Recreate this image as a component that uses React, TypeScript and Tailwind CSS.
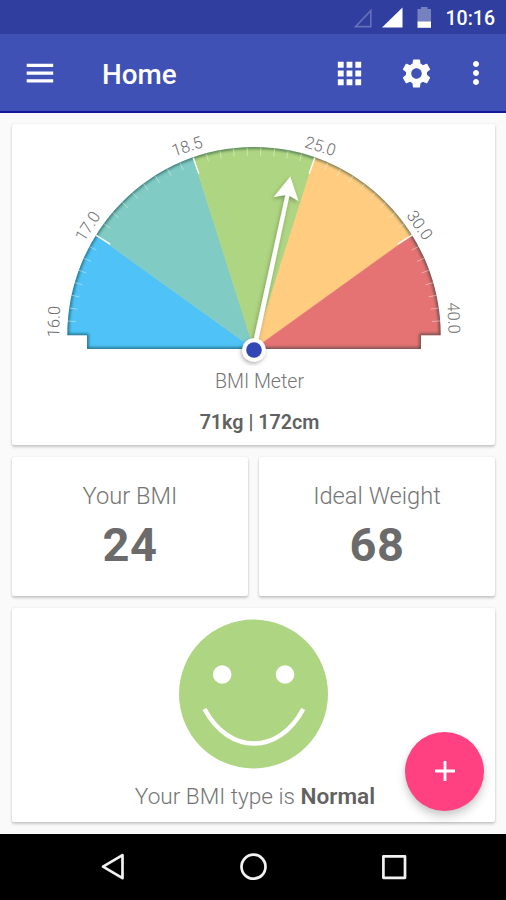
import { useState } from "react";
import { MdApps, MdMoreVert, MdSettings } from "react-icons/md";

const CX = 254;
const CY = 334;
const R = 186.5;

// angles run clockwise from the left end of the dial
const STOPS = [0, 32, 71, 109, 148, 180];
const COLORS = ["#4fc3f7", "#80cbc4", "#aed581", "#ffcc80", "#e57373"];
const TICKS = [7, 8, 8, 8, 7];

const LABELS = [
  { text: "16.0", x: 53.5, y: 321.5, rotate: -88 },
  { text: "17.0", x: 87.5, y: 226, rotate: -57 },
  { text: "18.5", x: 187, y: 146, rotate: -18 },
  { text: "25.0", x: 320.5, y: 146, rotate: 17 },
  { text: "30.0", x: 420, y: 225, rotate: 55 },
  { text: "40.0", x: 454, y: 318, rotate: 88 },
];

const OUTLINE = "M67.3 335.3A186.7 188.3 0 0 1 440.7 335.3H421V349H87V335.3Z";

function point(deg: number, r: number) {
  const a = (deg * Math.PI) / 180;
  return { x: CX - r * Math.cos(a), y: CY - r * Math.sin(a) };
}

function wedge(i: number) {
  const a = i === 0 ? { x: 40, y: 350 } : point(STOPS[i], R);
  const b = i === COLORS.length - 1 ? { x: 467, y: 350 } : point(STOPS[i + 1], R);
  const far = point((STOPS[i] + STOPS[i + 1]) / 2, R + 60);
  return `M${CX} 349L${a.x} ${a.y}L${far.x} ${far.y}L${b.x} ${b.y}Z`;
}

function Tick({ deg, length, opacity, width }: { deg: number; length: number; opacity: number; width: number }) {
  const a = point(deg, R);
  const b = point(deg, R - length);
  return <line x1={a.x} y1={a.y} x2={b.x} y2={b.y} stroke="#fff" strokeWidth={width} opacity={opacity} />;
}

function Gauge() {
  return (
    <svg viewBox="12 124 484 242" className="block h-[242px] w-[484px]">
      <defs>
        <clipPath id="dial">
          <path d={OUTLINE} />
        </clipPath>
        <filter id="soft" x="-20%" y="-20%" width="140%" height="140%">
          <feGaussianBlur stdDeviation="1.6" />
        </filter>
        <filter id="drop" x="-50%" y="-20%" width="200%" height="140%">
          <feDropShadow dx="-1" dy="2" stdDeviation="2" floodColor="#000" floodOpacity="0.3" />
        </filter>
      </defs>
      <g clipPath="url(#dial)">
        {COLORS.map((c, i) => (
          <path key={c} d={wedge(i)} fill={c} stroke={c} strokeWidth="0.5" />
        ))}
        <path d={OUTLINE} fill="none" stroke="#00332f" strokeWidth="3" opacity="0.6" filter="url(#soft)" />
      </g>
      {TICKS.map((n, i) =>
        Array.from({ length: n }, (_, k) => {
          const deg = STOPS[i] + ((STOPS[i + 1] - STOPS[i]) * (k + 1)) / (n + 1);
          return <Tick key={deg} deg={deg} length={8} opacity={0.4} width={1} />;
        }),
      )}
      {STOPS.slice(1, -1).map((deg) => (
        <Tick key={deg} deg={deg} length={17} opacity={0.9} width={1.5} />
      ))}
      {LABELS.map((l) => (
        <text
          key={l.text}
          transform={`translate(${l.x} ${l.y}) rotate(${l.rotate})`}
          textAnchor="middle"
          dy="0.36em"
          className="fill-[#6b6b6b] text-[16.5px] font-light"
        >
          {l.text}
        </text>
      ))}
      <g filter="url(#drop)">
        <path d="M252 347L285.4 195L273.7 197L290.3 176.5L298.5 201L289.4 195.8L257 347Z" fill="#fff" />
      </g>
      <circle cx="254" cy="350" r="11.8" fill="#fff" filter="url(#drop)" />
      <circle cx="254" cy="350" r="7.8" fill="#3247b5" />
    </svg>
  );
}

function Card({ className, children }: { className?: string; children: React.ReactNode }) {
  return (
    <section
      className={[
        "flex flex-col items-center rounded-[2px] bg-white shadow-[0_2px_3px_rgba(0,0,0,0.2),0_0_2px_rgba(0,0,0,0.1)]",
        className ?? "",
      ].join(" ")}
    >
      {children}
    </section>
  );
}

function Stat({ label, value }: { label: string; value: number }) {
  return (
    <Card className="h-[139px] flex-1 pt-[24px]">
      <div className="text-[23.7px] leading-[30px] font-light text-[#757575]">{label}</div>
      <div className="mt-[6px] text-[47px] leading-[56px] font-bold tracking-[0.5px] text-[#6b6b6b]">{value}</div>
    </Card>
  );
}

function StatusBar() {
  return (
    <div className="flex h-[34px] items-center justify-end bg-[#303f9f] pt-[2px] pr-[11px]">
      <svg viewBox="0 0 80 22" className="h-[22px] w-[80px]">
        <path d="M2.5 19.6H17.8V3.6Z" fill="none" stroke="#6470b8" strokeWidth="1.6" />
        <path d="M29 20.4H49.5V0.4Z" fill="#fff" />
        <path d="M64.5 2H68V0H74.5V2H78V15H64.5Z" fill="#7781c0" />
        <path d="M64.5 14.5H78V20.8H64.5Z" fill="#fff" />
      </svg>
      <span className="ml-[13px] pt-[2px] text-[19.5px] font-medium text-white">10:16</span>
    </div>
  );
}

function AppBar() {
  return (
    <header className="flex h-[79px] items-center border-b-2 border-[#16189a] bg-[#3f51b5] pt-px pr-[12px] pl-[26px] text-white">
      <button aria-label="menu">
        <svg viewBox="0 0 28 22" className="h-[22px] w-[28px]" fill="currentColor">
          <path d="M0.7 1.8H27.2V5H0.7ZM0.7 9.5H27.2V12.7H0.7ZM0.7 17.2H27.2V20.4H0.7Z" />
        </svg>
      </button>
      <h1 className="ml-[48px] flex-1 pt-[4px] text-[27.8px] font-medium">Home</h1>
      <button aria-label="apps">
        <MdApps size={35} />
      </button>
      <button className="ml-[32px]" aria-label="settings">
        <MdSettings size={35} />
      </button>
      <button className="ml-[24px]" aria-label="more">
        <MdMoreVert size={36} />
      </button>
    </header>
  );
}

function NavBar() {
  return (
    <nav className="flex h-[66px] items-center justify-center gap-[110px] bg-black">
      <svg viewBox="0 0 30 30" className="size-[30px]" fill="none" stroke="#f2f2f2" strokeWidth="2.7" strokeLinejoin="round">
        <path d="M5 14.7L24.5 3.2V26.2Z" />
      </svg>
      <svg viewBox="0 0 30 30" className="size-[30px]" fill="none" stroke="#f2f2f2" strokeWidth="2.7">
        <circle cx="15.5" cy="14.7" r="12" />
      </svg>
      <svg viewBox="0 0 30 30" className="size-[30px]" fill="none" stroke="#f2f2f2" strokeWidth="2.7" strokeLinejoin="round">
        <path d="M5.4 4.3H27V25.8H5.4Z" />
      </svg>
    </nav>
  );
}

export default function App() {
  const [bmi] = useState(24);

  return (
    <div className="relative flex h-[900px] w-[506px] flex-col overflow-hidden bg-[#fafafa] font-['Roboto',sans-serif]">
      <StatusBar />
      <AppBar />
      <main className="flex flex-1 flex-col gap-[12px] pt-[11px] pr-[11px] pl-[12px]">
        <Card className="h-[321px]">
          <Gauge />
          <div className="mt-[3px] pl-[12px] text-[19.6px] leading-[26px] font-light text-[#757575]">BMI Meter</div>
          <div className="mt-[15px] pl-[12px] text-[19.7px] leading-[26px] font-semibold text-[#616161]">71kg | 172cm</div>
        </Card>
        <div className="flex gap-[11px]">
          <Stat label="Your BMI" value={bmi} />
          <Stat label="Ideal Weight" value={68} />
        </div>
        <Card className="h-[214px] pt-[11px]">
          <svg viewBox="179 619 150 150" className="size-[150px] shrink-0">
            <circle cx="253.5" cy="694" r="74.5" fill="#aed581" />
            <circle cx="222.2" cy="674.5" r="9.3" fill="#fff" />
            <circle cx="285" cy="674.5" r="9.3" fill="#fff" />
            <path d="M204.5 709C229 755 279 755 303.2 709" fill="none" stroke="#fff" strokeWidth="4.5" />
          </svg>
          <div className="mt-[13px] pl-[3px] text-[22.6px] leading-[30px] font-light text-[#757575]">
            Your BMI type is <span className="font-semibold text-[#616161]">Normal</span>
          </div>
        </Card>
      </main>
      <button
        aria-label="add"
        className="absolute right-[22px] bottom-[89.5px] flex size-[79px] items-center justify-center rounded-full bg-[#ff4081] shadow-[0_6px_10px_rgba(0,0,0,0.18),0_1px_5px_rgba(0,0,0,0.06)]"
      >
        <svg viewBox="0 0 20 20" className="size-[20px]" stroke="#fff" strokeWidth="2.8">
          <path d="M10 0V20M0 10H20" />
        </svg>
      </button>
      <NavBar />
    </div>
  );
}
